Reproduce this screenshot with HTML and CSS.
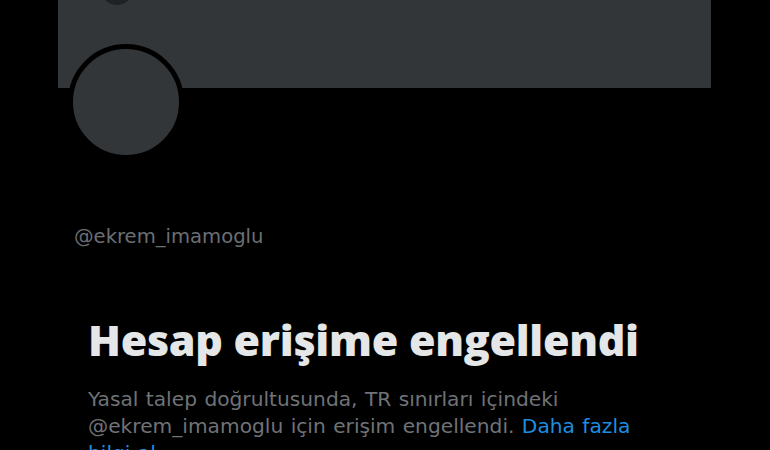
FILE: index.html
```html
<!DOCTYPE html>
<html lang="tr">
<head>
  <meta charset="UTF-8">
  <meta name="viewport" content="width=device-width, initial-scale=1.0">
  <title>@ekrem_imamoglu</title>
  <link rel="stylesheet" href="styles.css">
</head>
<body>
  <div class="profile">
    <div class="banner">
      <span class="back"></span>
    </div>
    <div class="avatar"></div>
    <div class="handle">@ekrem_imamoglu</div>

    <div class="notice">
      <h1>Hesap erişime engellendi</h1>
      <p>Yasal talep doğrultusunda, TR sınırları içindeki @ekrem_imamoglu için erişim engellendi. <a href="#">Daha fazla bilgi al</a></p>
    </div>
  </div>
</body>
</html>
```

FILE: styles.css
```css
body {
  margin: 0;
  background: #000;
  font-family: "DejaVu Sans", "Open Sans", sans-serif;
  overflow: hidden;
}
.profile {
  margin-left: 58px;
  width: 653px;
}
.banner {
  height: 88px;
  background: #333639;
  overflow: hidden;
}
.back {
  display: block;
  width: 34px;
  height: 34px;
  margin: -29px 0 0 42px;
  border-radius: 50%;
  background: #1f2124;
}
.avatar {
  width: 106px;
  height: 106px;
  margin: -44px 0 0 10px;
  border: 5px solid #000;
  border-radius: 50%;
  background: #333639;
}
.handle {
  margin: 65px 0 0 16px;
  color: #6b6f73;
  font-size: 19.6px;
}
.notice {
  margin: 62px 0 0 30px;
}
h1 {
  margin: 0;
  color: #e4e6e7;
  font-family: "Open Sans", sans-serif;
  font-size: 43px;
  font-weight: 800;
  letter-spacing: -0.3px;
}
p {
  margin: 17px 0 0;
  color: #6f7377;
  font-size: 20.2px;
  line-height: 27px;
  width: 585px;
  word-spacing: 1px;
}
a {
  color: #1d8fe0;
  text-decoration: none;
}
```
